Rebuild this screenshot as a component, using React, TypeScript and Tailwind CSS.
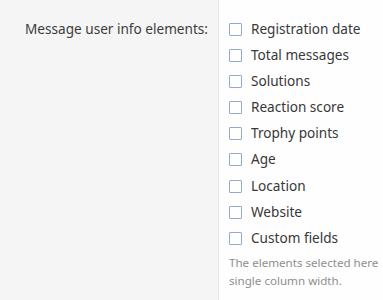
import React from "react";

const items = [
  "Registration date",
  "Total messages",
  "Solutions",
  "Reaction score",
  "Trophy points",
  "Age",
  "Location",
  "Website",
  "Custom fields",
];

export default function App() {
  return (
    <div
      className="flex h-[300px] w-[383px] overflow-hidden bg-[#fefefe] text-[#383838]"
      style={{ fontFamily: '"Segoe UI", "Noto Sans", sans-serif' }}
    >
      <div className="w-[219px] shrink-0 border-r border-[#e6e6e6] bg-[#f5f5f5] pr-[10px] pt-[19px] text-right text-[13.6px] leading-[20px] text-[#3c3c3c]">
        Message user info elements:
      </div>
      <div className="flex-1 pl-[10px] pt-[19px]">
        <ul className="flex flex-col">
          {items.map((t) => (
            <li key={t} className="flex h-[26.1px] items-start">
              <span className="mt-[4px] h-[13px] w-[13px] shrink-0 rounded-[1px] border-[1.5px] border-[#93aad0] bg-white" />
              <span className="ml-[9px] whitespace-nowrap text-[13.6px] leading-[20px]">{t}</span>
            </li>
          ))}
        </ul>
        <p className="mt-[0px] whitespace-nowrap text-[11.6px] leading-[18px] text-[#8e8e8e]">
          The elements selected here
          <br />
          single column width.
        </p>
      </div>
    </div>
  );
}
